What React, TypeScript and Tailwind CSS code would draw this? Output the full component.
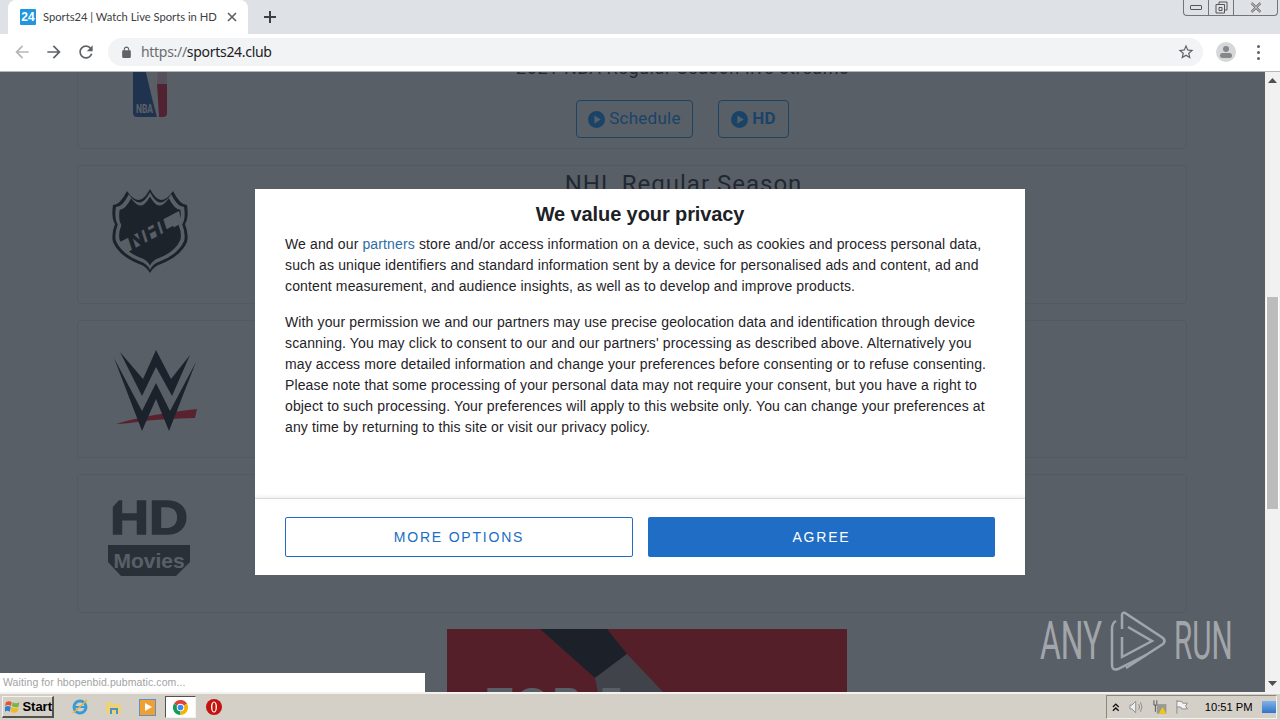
import React from 'react';

const sans = 'font-["Liberation_Sans",Arial,sans-serif]';
const din = 'font-["Roboto","Liberation_Sans",sans-serif]';

const shieldPath =
  'M2 17 Q9 17 16 3 Q22 12 28 12 Q33 12 39 1 Q45 12 50 12 Q56 12 62 3 Q69 17 76 17 Q78 30 74 36 Q78 46 76 54 Q70 68 50 76 Q43 78 39 85 Q35 78 28 76 Q8 68 2 54 Q0 46 4 36 Q0 30 2 17 Z';

const NbaLogo = () => (
  <svg width="34" height="58" viewBox="0 0 34 58">
    <path d="M0 0 H10 L20 42 L24 57 H4 Q0 57 0 53 Z" fill="#1d4f9c" />
    <path d="M24 24 H34 V53 Q34 57 30 57 H26 Z" fill="#e0102c" />
    <path d="M25 10 H34 V24 H24 Z" fill="#e0102c" opacity="0.25" />
    <text x="3" y="53" fontSize="13" fontWeight="700" fill="#fff" fontFamily="Roboto, sans-serif" textLength="17" lengthAdjust="spacingAndGlyphs">NBA</text>
  </svg>
);

const NhlLogo = () => (
  <svg width="78" height="86" viewBox="0 0 78 86">
    <path d={shieldPath} fill="#111" />
    <g transform="translate(39 43) scale(0.92) translate(-39 -43)">
      <path d={shieldPath} fill="#fff" />
    </g>
    <g transform="translate(39 43) scale(0.82) translate(-39 -43)">
      <path d={shieldPath} fill="#111" />
    </g>
    <path d="M9 54 L68 23 L71 35 L15 65 Z" fill="#fff" />
    <text x="39" y="53" textAnchor="middle" fontSize="26" fontWeight="900" fontStyle="italic" fill="#111" fontFamily="Roboto, sans-serif" transform="rotate(-28 39 44)">NHL</text>
  </svg>
);

const WweLogo = () => (
  <svg width="84" height="84" viewBox="0 0 84 84">
    <path d="M2 75 Q30 66 83 60 L81 69 Q50 70 30 72 Q12 75 2 75 Z" fill="#ff0f20" />
    <path d="M6 3 L29 30 L42 1 L57 30 L76 6 L58 47 L42 18 L28 47 Z" fill="#0a0f14" />
    <path d="M0 9 L28 62 L42 34 L56 62 L82 13 L55 82 L42 50 L28 82 Z" fill="#0a0f14" />
  </svg>
);

const HdMoviesLogo = () => (
  <svg width="82" height="78" viewBox="0 0 82 78">
    <text x="2" y="35" fontSize="48" fontWeight="700" fill="#444" stroke="#444" strokeWidth="1.5" fontFamily="Liberation Sans, Arial, sans-serif" textLength="78" lengthAdjust="spacingAndGlyphs">HD</text>
    <path d="M0 0 H12 L2 11 L0 11 Z" fill="#fff" />
    <path d="M0 46 H82 V63 L68 77 H13 L0 63 Z" fill="#444" />
    <text x="41" y="69" textAnchor="middle" fontSize="21" fontWeight="700" fill="#fff" fontFamily="Liberation Sans, Arial, sans-serif">Movies</text>
  </svg>
);

const PlayCircle = () => (
  <svg width="17" height="17" viewBox="0 0 24 24" className="shrink-0">
    <circle cx="12" cy="12" r="12" fill="#0090ff" />
    <path d="M9 6.5 L18 12 L9 17.5 Z" fill="#fff" />
  </svg>
);

const Card = ({ className, children }: { className: string; children: React.ReactNode }) => (
  <div className={`flex rounded border border-[#e5e5e5] bg-white ${className}`}>{children}</div>
);

const Page = () => (
  <div className="-mt-[73px] bg-white pl-[77px]">
    <div className="flex w-[1110px] flex-col gap-4 pt-[11px]">
      <Card className="h-[139px]">
        <div className="flex w-[144px] justify-center pt-[49px]">
          <NbaLogo />
        </div>
        <div className={`${din} flex flex-1 flex-col items-center pt-[46px] pr-[43px] text-[18px] tracking-[0.6px] text-[#212529]`}>
          <div className="h-[22px] leading-[22px]">2021 NBA Regular Season live streams</div>
          <div className="mt-[21px] flex gap-[25px] text-[17px] tracking-[0.25px]">
            <div className="flex h-[38px] w-[117px] items-center justify-center gap-1 rounded border border-[#0090ff] text-[#0090ff]">
              <PlayCircle />
              <span>Schedule</span>
            </div>
            <div className="flex h-[38px] w-[71px] items-center justify-center gap-1 rounded border border-[#0090ff] font-bold text-[#0090ff]">
              <PlayCircle />
              <span>HD</span>
            </div>
          </div>
        </div>
      </Card>
      <Card className="h-[139px]">
        <div className="flex w-[144px] justify-center pt-[22px]">
          <NhlLogo />
        </div>
        <div className={`${din} flex flex-1 justify-center pt-[4px] pr-[41px] text-[24px] leading-[28px] tracking-[1px] text-[#212529]`}>
          NHL Regular Season
        </div>
      </Card>
      <Card className="h-[138px]">
        <div className="flex w-[155px] justify-center pt-[28px]">
          <WweLogo />
        </div>
      </Card>
      <Card className="h-[139px]">
        <div className="flex w-[142px] justify-center pt-[24px]">
          <HdMoviesLogo />
        </div>
      </Card>
      <div className="relative ml-[370px] h-[200px] w-[400px] overflow-hidden bg-[#f00008]">
        <svg width="400" height="200" viewBox="0 0 400 200" className="block">
          <path d="M93 0 H160 L180 25 L148 49 Z" fill="#0c0a0a" />
          <path d="M148 49 L180 25 L216 63 L290 200 H180 Z" fill="#9c948c" />
        </svg>
        <div className={`${sans} absolute top-[50px] left-[40px] text-[42px] leading-[48px] font-bold tracking-[4px] text-white`}>TOP 5</div>
      </div>
    </div>
  </div>
);

const ConsentDialog = () => (
  <div className={`${sans} flex h-[386px] w-[770px] flex-col bg-white`}>
    <div className="flex h-[309px] flex-col px-[30px] text-[14px] leading-[21px] tracking-[0.13px] text-[#1f2328]">
      <h1 className="pt-[12px] text-center text-[20px] leading-[26px] font-bold tracking-[-0.1px] text-[#1c2126]">We value your privacy</h1>
      <p className="mt-[7px] w-[710px]">
        We and our <span className="text-[#2e6da4]">partners</span> store and/or access information on a device, such as cookies and process personal data, such as unique identifiers and standard information sent by a device for personalised ads and content, ad and content measurement, and audience insights, as well as to develop and improve products.
      </p>
      <p className="mt-[15px] w-[710px]">
        With your permission we and our partners may use precise geolocation data and identification through device scanning. You may click to consent to our and our partners' processing as described above. Alternatively you may access more detailed information and change your preferences before consenting or to refuse consenting. Please note that some processing of your personal data may not require your consent, but you have a right to object to such processing. Your preferences will apply to this website only. You can change your preferences at any time by returning to this site or visit our privacy policy.
      </p>
    </div>
    <div className="flex flex-1 items-start gap-[15px] border-t border-[#d8d8d8] px-[30px] pt-[18px] shadow-[0_-2px_3px_rgba(0,0,0,0.06)]">
      <button className="h-[40px] w-[348px] rounded-[2px] border border-[#206dc5] text-[14px] tracking-[1.8px] text-[#206dc5]">MORE OPTIONS</button>
      <button className="h-[40px] w-[347px] rounded-[2px] bg-[#206dc5] text-[14px] tracking-[1.8px] text-white">AGREE</button>
    </div>
  </div>
);

const TabStrip = () => (
  <div className="relative flex h-[34px] shrink-0 items-end bg-[#dee1e6]">
    <div className="ml-[8px] flex h-[34px] w-[240px] items-center rounded-t-[8px] bg-white pl-[12px]">
      <div className={`${sans} flex h-4 w-4 items-center justify-center rounded-[1px] bg-[#2196e0] text-[12px] font-bold text-white`}>24</div>
      <span className='ml-[7px] w-[184px] shrink-0 font-["Lato",sans-serif] text-[11.2px] whitespace-nowrap text-[#3c4043]'>Sports24 | Watch Live Sports in HD</span>
      <svg width="10" height="10" viewBox="0 0 10 10" className="shrink-0">
        <path d="M1 1 L9 9 M9 1 L1 9" stroke="#5f6368" strokeWidth="1.7" />
      </svg>
    </div>
    <svg width="14" height="14" viewBox="0 0 14 14" className="mb-[10px] ml-[15px]">
      <path d="M7 1 V13 M1 7 H13" stroke="#3c4043" strokeWidth="2" />
    </svg>
    <div className="mr-[2px] mb-[18px] ml-auto flex h-[16px] w-[95px] rounded-b-[4px] border border-t-0 border-[#70757c] bg-[#dee1e6]">
      <div className="flex w-[25px] items-center justify-center border-r border-[#70757c]">
        <div className="h-[5px] w-[12px] rounded-[1px] border border-[#555]" />
      </div>
      <div className="flex w-[25px] items-center justify-center border-r border-[#70757c]">
        <svg width="13" height="13" viewBox="0 0 13 13">
          <path d="M4 3 V1 H12 V9 H10 M1 3.5 H9.5 V12 H1 Z M4 6.5 H7 V9.5 H4 Z" fill="none" stroke="#555" />
        </svg>
      </div>
      <div className="flex flex-1 items-center justify-center">
        <svg width="12" height="11" viewBox="0 0 12 11">
          <path d="M1.5 1 L10.5 10 M10.5 1 L1.5 10" stroke="#555" strokeWidth="2.4" />
          <path d="M1.5 1 L10.5 10 M10.5 1 L1.5 10" stroke="#eee" strokeWidth="1" />
        </svg>
      </div>
    </div>
  </div>
);

const Toolbar = () => (
  <div className="flex h-[38px] shrink-0 items-center border-b border-[#b4b6b9] bg-white pb-[1px]">
    <svg width="20" height="20" viewBox="0 0 24 24" className="ml-[12px]" fill="#b4b6ba">
      <path d="M20 11H7.83l5.59-5.59L12 4l-8 8 8 8 1.41-1.41L7.83 13H20v-2z" />
    </svg>
    <svg width="20" height="20" viewBox="0 0 24 24" className="ml-[12px]" fill="#5f6368">
      <path d="M4 11h12.17l-5.59-5.59L12 4l8 8-8 8-1.41-1.41L16.17 13H4v-2z" />
    </svg>
    <svg width="20" height="20" viewBox="0 0 24 24" className="ml-[12px]" fill="#5f6368">
      <path d="M17.65 6.35C16.2 4.9 14.21 4 12 4c-4.42 0-7.99 3.58-7.99 8s3.57 8 7.99 8c3.73 0 6.84-2.55 7.73-6h-2.08c-.82 2.33-3.04 4-5.65 4-3.31 0-6-2.69-6-6s2.69-6 6-6c1.66 0 3.14.69 4.22 1.78L13 11h7V4l-2.35 2.35z" />
    </svg>
    <div className="ml-[12px] flex h-[28px] w-[1095px] items-center rounded-full bg-[#f1f3f4] pl-[12px]">
      <svg width="13" height="13" viewBox="0 0 24 24" fill="#5f6368">
        <path d="M18 8h-1V6c0-2.76-2.24-5-5-5S7 3.24 7 6v2H6c-1.1 0-2 .9-2 2v10c0 1.1.9 2 2 2h12c1.1 0 2-.9 2-2V10c0-1.1-.9-2-2-2zM9 6c0-1.66 1.34-3 3-3s3 1.34 3 3v2H9V6z" />
      </svg>
      <span className='-mt-[1px] ml-[8px] font-["Noto_Sans",sans-serif] text-[14px] tracking-[-0.3px] text-[#202124]'>
        <span className="text-[#6a6d71]">https://</span>sports24.club
      </span>
      <svg width="18" height="18" viewBox="0 0 24 24" fill="#5f6368" className="mr-[8px] ml-auto">
        <path d="M22 9.24l-7.19-.62L12 2 9.19 8.63 2 9.24l5.46 4.73L5.82 21 12 17.27 18.18 21l-1.63-7.03L22 9.24zM12 15.4l-3.76 2.27 1-4.28-3.32-2.88 4.38-.38L12 6.1l1.71 4.04 4.38.38-3.32 2.88 1 4.28L12 15.4z" />
      </svg>
    </div>
    <div className="ml-[13px] flex h-5 w-5 flex-col items-center justify-center rounded-full bg-[#d6d7d8]">
      <div className="h-[6px] w-[6px] rounded-full bg-[#85878a]" />
      <div className="mt-[1px] h-[5px] w-[12px] rounded-full bg-[#85878a]" />
    </div>
    <div className="ml-[21px] flex flex-col gap-[3px]">
      <div className="h-[3px] w-[3px] rounded-full bg-[#5f6368]" />
      <div className="h-[3px] w-[3px] rounded-full bg-[#5f6368]" />
      <div className="h-[3px] w-[3px] rounded-full bg-[#5f6368]" />
    </div>
  </div>
);

const Scrollbar = () => (
  <div className="flex w-[15px] shrink-0 flex-col items-center bg-[#f1f1f1]">
    <svg width="9" height="5" viewBox="0 0 9 5" className="mt-[6px]"><path d="M4.5 0 L9 5 H0 Z" fill="#505050" /></svg>
    <div className="mt-[214px] h-[212px] w-[13px] border-x border-white bg-[#bcbcbc]" />
    <div className="flex-1" />
    <svg width="9" height="5" viewBox="0 0 9 5" className="mb-[6px]"><path d="M4.5 5 L9 0 H0 Z" fill="#505050" /></svg>
  </div>
);

const Watermark = () => (
  <div className='flex items-center font-["Roboto","Liberation_Sans",sans-serif] text-[53px] leading-[60px] text-[#a2a6aa]'>
    <span className="w-[60px] origin-left scale-x-[0.6] whitespace-nowrap">ANY</span>
    <svg width="56" height="60" viewBox="0 0 56 60" className="mr-[8px] ml-[10px]" fill="none" stroke="#a2a6aa" strokeWidth="2.5">
      <path d="M6 10 Q2 12 2 18 V54 Q2 60 8 58 L36 44" />
      <path d="M12 18 V4 Q12 1 15 2 L53 27 Q56 30 53 33 L16 57" />
      <path d="M18 16 L42 30 L12 46 V26" />
    </svg>
    <span className="w-[55px] origin-left scale-x-[0.56] whitespace-nowrap">RUN</span>
  </div>
);

const Taskbar = () => (
  <div className="flex h-[28px] shrink-0 items-center border-t-2 border-[#f4f2ee] bg-[#d4d0c8]">
    <div className={`${sans} ml-[2px] flex h-[22px] w-[52px] items-center gap-[2px] border border-r-2 border-b-2 border-[#f4f2ee] border-r-[#55524c] border-b-[#55524c] pl-[2px] text-[13px] font-bold text-black`}>
      <svg width="16" height="15" viewBox="0 0 16 15">
        <path d="M1 3 Q4 1 7 3 L6 7 Q3 5 0 7 Z" fill="#e8532b" />
        <path d="M8 3 Q11 5 15 3 L14 8 Q10 9 7 7 Z" fill="#7cb542" />
        <path d="M0 8 Q3 6 6 8 L5 13 Q2 11 0 13 Z" fill="#2f7fd0" />
        <path d="M7 8 Q10 10 14 9 L13 13 Q9 15 6 13 Z" fill="#f2b824" />
      </svg>
      Start
    </div>
    <svg width="18" height="18" viewBox="0 0 18 18" className="ml-[17px]">
      <circle cx="9" cy="9" r="6" fill="none" stroke="#3a9ad9" strokeWidth="3" />
      <path d="M4 9 H14" stroke="#3a9ad9" strokeWidth="2" />
      <path d="M2 15 Q8 10 16 2" fill="none" stroke="#e9b530" strokeWidth="1.5" />
    </svg>
    <svg width="18" height="18" viewBox="0 0 18 18" className="ml-[16px]">
      <path d="M1 4 H7 L8 6 H16 V16 H1 Z" fill="#eed27a" />
      <path d="M5 10 H13 V16 H11 V12 H7 V16 H5 Z" fill="#4a95c6" />
    </svg>
    <div className="ml-[16px] flex h-[17px] w-[17px] items-center justify-center border border-[#5b8fd0] bg-[#f0a030]">
      <svg width="10" height="10" viewBox="0 0 10 10"><path d="M2 1 L9 5 L2 9 Z" fill="#fff" /></svg>
    </div>
    <div className="ml-[9px] flex h-[22px] w-[31px] items-center justify-center border border-t-[#55524c] border-r-[#f4f2ee] border-b-[#f4f2ee] border-l-[#55524c] bg-white">
      <svg width="15" height="15" viewBox="0 0 24 24">
        <path d="M12 12 L22.4 6 A12 12 0 0 0 1.6 6 Z" fill="#db4437" />
        <path d="M12 12 L1.6 6 A12 12 0 0 0 12 24 Z" fill="#0f9d58" />
        <path d="M12 12 L12 24 A12 12 0 0 0 22.4 6 Z" fill="#f4b400" />
        <circle cx="12" cy="12" r="6" fill="#fff" />
        <circle cx="12" cy="12" r="4.5" fill="#4285f4" />
      </svg>
    </div>
    <svg width="16" height="16" viewBox="0 0 16 16" className="ml-[10px]">
      <circle cx="8" cy="8" r="8" fill="#c4120f" />
      <ellipse cx="8" cy="8" rx="3" ry="5.5" fill="#fff" />
      <ellipse cx="8" cy="8" rx="1.6" ry="4.6" fill="#c4120f" />
    </svg>
    <div className="mr-[3px] ml-auto flex h-[24px] w-[171px] items-center border border-t-[#8a877f] border-r-[#f4f2ee] border-b-[#f4f2ee] border-l-[#8a877f] pl-[4px]">
      <svg width="10" height="10" viewBox="0 0 10 10" fill="none" stroke="#111" strokeWidth="1.4">
        <path d="M2 5 L5 2 L8 5 M2 9 L5 6 L8 9" />
      </svg>
      <svg width="16" height="14" viewBox="0 0 16 14" className="ml-[8px]" fill="none" stroke="#8c8c8c">
        <path d="M1 5 H3 L7 1 V13 L3 9 H1 Z" fill="#eee" />
        <path d="M10 4 Q12 7 10 10 M12 2 Q15 7 12 12" />
      </svg>
      <svg width="16" height="16" viewBox="0 0 16 16" className="ml-[8px]">
        <path d="M2 1 V6 H5 V1 M3.5 6 V13" fill="none" stroke="#555" />
        <rect x="5" y="5" width="10" height="10" fill="#9a9a94" />
        <path d="M11 8 L15 15 H7 Z" fill="#f2c811" />
      </svg>
      <svg width="16" height="16" viewBox="0 0 16 16" className="ml-[7px]" fill="none" stroke="#8c8c8c">
        <path d="M3 1 V15 M3 2 H8 L9 4 H14 L12 7 L14 10 H8 L7 8 H3" fill="#f2f2f2" />
      </svg>
      <span className={`${sans} ml-[15px] text-[11.2px] whitespace-nowrap text-black`}>10:51 PM</span>
      <div className="ml-[9px] h-[12px] w-[15px] bg-gradient-to-b from-[#7fb2e8] to-[#2f74c6]" />
    </div>
  </div>
);

export default function App() {
  return (
    <div className="flex h-[720px] w-[1280px] flex-col overflow-hidden bg-white">
      <TabStrip />
      <Toolbar />
      <div className="relative flex min-h-0 flex-1">
        <div className="min-w-0 flex-1 overflow-hidden">
          <Page />
        </div>
        <Scrollbar />

        {/* dimmed overlay + consent dialog */}
        <div className="absolute inset-y-0 right-[15px] left-0 flex items-start bg-[rgba(33,41,52,0.75)] pt-[117px] pl-[255px]">
          <ConsentDialog />
        </div>

        <div className="absolute right-[51px] bottom-[21px]">
          <Watermark />
        </div>

        <div className={`${sans} absolute bottom-0 left-0 flex h-[19px] w-[425px] items-center bg-white pt-[1px] pl-[3px] text-[10.5px] tracking-[0.1px] text-[#a3a3a3]`}>
          Waiting for hbopenbid.pubmatic.com...
        </div>
      </div>
      <Taskbar />
    </div>
  );
}
